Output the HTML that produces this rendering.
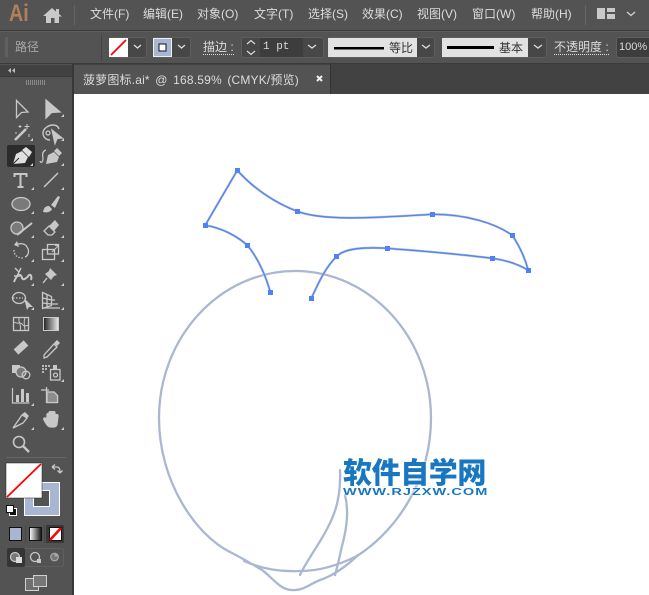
<!DOCTYPE html>
<html lang="zh"><head><meta charset="utf-8">
<style>
html,body{margin:0;padding:0;background:#fff}
#p{position:relative;width:649px;height:595px;overflow:hidden;background:#fff;font-family:"Liberation Sans","Noto Sans CJK SC",sans-serif}
#p svg{position:absolute;left:0;top:0}
.t{position:absolute;white-space:nowrap;font-size:12px;line-height:16px;color:#dcdcdc}
.u{border-bottom:1px dotted #ddd;line-height:14px}
</style></head><body>
<div id="p">
<svg width="649" height="595" viewBox="0 0 649 595" fill="none">
<!-- chrome -->
<rect width="649" height="595" fill="#535353"/>
<rect x="0" y="30" width="649" height="1" fill="#3a3a3a"/>
<rect x="0" y="31" width="649" height="1" fill="#5f5f5f"/>
<rect x="0" y="63" width="649" height="1" fill="#3a3a3a"/>
<rect x="72" y="64" width="577" height="30" fill="#424242"/>
<rect x="72" y="64" width="2" height="531" fill="#383838"/>
<rect x="74" y="65" width="256" height="29" fill="#535353"/>
<rect x="330" y="64" width="1" height="30" fill="#333"/>
<rect x="74" y="94" width="575" height="501" fill="#fff"/>
<rect x="0" y="65" width="72" height="11" fill="#424242"/>
<rect x="0" y="76" width="72" height="1" fill="#3a3a3a"/>
<path d="M11 68l-3 2.500 3 2.500zM15 68l-3 2.500 3 2.500z" fill="#bdbdbd"/>
<path d="M26.500 80v5M28.500 80v5M30.500 80v5M32.500 80v5M34.500 80v5M36.500 80v5M38.500 80v5M40.500 80v5M42.500 80v5M44.500 80v5" stroke="#8a8a8a"/>
<!-- top bar -->
<path d="M43 16l9-8 4 3.500V9h3v5l3 2.500h-3V23h-4.500v-5h-3.500v5H46v-7z" fill="#c9c9c9"/>
<rect x="74" y="5" width="1" height="20" fill="#666"/>
<rect x="585" y="5" width="1" height="20" fill="#666"/>
<path d="M597 8h8v11h-8zM607 8h8v4h-8zM607 14h8v5h-8z" fill="#c9c9c9"/>
<path d="M627 12l4 3.500 4-3.500" stroke="#d0d0d0" stroke-width="1.300"/>
<!-- control bar -->
<path d="M5 38h3M5 40h3M5 42h3M5 44h3M5 46h3M5 48h3M5 50h3M5 52h3M5 54h3M5 56h3" stroke="#6e6e6e"/>
<rect x="101" y="35" width="1" height="25" fill="#424242"/>
<rect x="109.500" y="37.500" width="37" height="20" rx="2" fill="#474747" stroke="#5e5e5e"/>
<rect x="109" y="38" width="19" height="19" fill="#fff"/>
<path d="M111 55L126 40" stroke="#f00" stroke-width="1.800"/>
<path d="M134 45l3.500 3 3.500-3" stroke="#ddd" stroke-width="1.300"/>
<rect x="153.500" y="37.500" width="37" height="20" rx="2" fill="#474747" stroke="#5e5e5e"/>
<rect x="153.500" y="38.500" width="18" height="18" fill="#a9b6d2" stroke="#eee"/>
<rect x="159" y="44" width="7" height="7" fill="#fff" stroke="#111"/>
<path d="M178 45l3.500 3 3.500-3" stroke="#ddd" stroke-width="1.300"/>
<rect x="241.500" y="37.500" width="82" height="20" rx="2" fill="#474747" stroke="#5e5e5e"/>
<rect x="260" y="38" width="43" height="19" fill="#3d3d3d"/>
<path d="M247 44l4-3.500 4 3.500M247 51l4 3.500 4-3.500" stroke="#ddd" stroke-width="1.200"/>
<path d="M308 45l4 3 4-3" stroke="#ddd" stroke-width="1.300"/>
<rect x="328.500" y="37.500" width="106" height="20" rx="2" fill="#474747" stroke="#5e5e5e"/>
<rect x="328" y="38" width="89" height="19" fill="#e2e2e2"/>
<rect x="334" y="47" width="50" height="2.500" fill="#000"/>
<path d="M422 45l4 3 4-3" stroke="#ddd" stroke-width="1.300"/>
<rect x="442.500" y="37.500" width="104" height="20" rx="2" fill="#474747" stroke="#5e5e5e"/>
<rect x="442" y="38" width="86" height="19" fill="#e2e2e2"/>
<rect x="447" y="46" width="47" height="3" fill="#000"/>
<path d="M534 45l4 3 4-3" stroke="#ddd" stroke-width="1.300"/>
<rect x="616.500" y="37.500" width="40" height="20" rx="2" fill="#3d3d3d" stroke="#5e5e5e"/>
<path d="M317 76l5 5M322 76l-5 5" stroke="#eee" stroke-width="2"/>
<!-- selected tool -->
<rect x="7" y="145" width="28" height="22" rx="2" fill="#2c2c2c"/>
<!-- corner flyouts -->
<g fill="#cfcfcf">
<path d="M64 117v-3l-3 3zM33 141v-3l-3 3zM64 141v-3l-3 3zM33 166v-3l-3 3zM64 166v-3l-3 3zM34 190v-3l-3 3zM64 190v-3l-3 3zM34 214v-3l-3 3zM64 214v-3l-3 3zM34 238v-3l-3 3zM64 238v-3l-3 3zM34 262v-3l-3 3zM64 262v-3l-3 3zM34 286v-3l-3 3zM64 286v-3l-3 3zM34 310v-3l-3 3zM64 310v-3l-3 3zM64 382v-3l-3 3zM34 406v-3l-3 3zM34 430v-3l-3 3zM64 430v-3l-3 3z"/>
</g>
<g stroke="#c8c8c8" stroke-width="1.300">
<!-- selection -->
<path d="M16.500 100.500v17l5-5 6.500-.5z"/>
<path d="M46 100v18l5.500-5.500 8.500-.5z" fill="#c8c8c8"/>
<!-- magic wand -->
<path d="M15 140l11-11" stroke-width="2.600"/>
<path d="M20 125v3M18.500 126.500h3M27 124v5M24.500 126.500h5M15 133h2M29 134v3" stroke-width="1"/>
<!-- lasso -->
<path d="M50 140c-4 0-7-3-7-7 0-4 5-8 10-8 3 0 5 1 6 4" stroke-width="1.400"/>
<path d="M52 130l10 8-5 .5-2 5z" fill="#c8c8c8"/>
<circle cx="48" cy="133" r="2"/>
<!-- pen -->
<path d="M13 164l3-10 6-3 6 6-3 6zM22 150l4-3 6 5-3 5z" fill="#e0e0e0" stroke="none"/>
<path d="M13 164l6-6" stroke="#2c2c2c" stroke-width="1"/>
<!-- curvature -->
<path d="M46 164l2-9 6-3 5 5-2 5zM54 151l3-3 5 5-3 3z" fill="#c8c8c8" stroke="none"/>
<path d="M46 150c-3 1-4 4-3 8 0 4-2 6-3 3" stroke-width="1.200"/>
<!-- type -->
<path d="M14.500 177v-3h12v3M20.500 174v13M17.500 187h6" stroke-width="2"/>
<!-- line -->
<path d="M44 187l14-14" stroke-width="1.500"/>
<!-- ellipse -->
<ellipse cx="21" cy="204" rx="9" ry="6.500" fill="#7a7a7a" stroke="#c8c8c8"/>
<!-- brush -->
<path d="M43 212c1-5 3-6 6-6l3 3c-1 3-5 4-9 3z" fill="#c8c8c8" stroke="none"/>
<path d="M51 205l7-9 2 1-5 11z" fill="#c8c8c8" stroke="none"/>
<!-- shaper -->
<circle cx="17" cy="228" r="6" fill="#7a7a7a"/>
<path d="M17 235l15-12" stroke-width="2"/>
<!-- eraser -->
<path d="M44 231l5-5 6 6-3 3h-4z"/>
<path d="M49 226l6-6 4 5-5 6z" fill="#c8c8c8" stroke="none"/>
<!-- rotate -->
<path d="M16 245c3-2 9-2 11 2 3 4 1 9-2 10" stroke-width="1.300"/>
<path d="M17 241l-3 4 5 2z" fill="#c8c8c8" stroke="none"/>
<path d="M14 250c0 5 3 8 9 8" stroke-dasharray="1.500 1.500"/>
<!-- scale -->
<rect x="42.500" y="249.500" width="12" height="10"/>
<rect x="47.500" y="244.500" width="11" height="9.500"/>
<path d="M52 252l6-6M55 245.500h3.500v3.500" stroke-width="1"/>
<!-- warp -->
<path d="M14 282c3-8 7-9 8-4 1 3 5 0 7-3 2-1 3 2 2 5" stroke-width="2"/>
<path d="M15 268l4 4M21 268l-4 8M14 276h6" stroke-width="1.400"/>
<!-- pin -->
<path d="M50 268l7 7-3 1-3 4-6-6 4-3z" fill="#c8c8c8" stroke="none"/>
<path d="M47 278l-4 5" stroke-width="1.400"/>
<!-- shape builder -->
<ellipse cx="19" cy="298" rx="6.500" ry="5.500"/>
<path d="M13 298h10" stroke-dasharray="1.500 1.500"/>
<path d="M24 298l9 9-4 0-2 3z" fill="#c8c8c8" stroke="none"/>
<!-- perspective -->
<path d="M42.500 292.500l9 4v9l-9 3zM42.500 298l9 2M42.500 303l9 1M47 295v12"/>
<path d="M52 300h3M52 304h6M43 308h17" stroke-width="1.200"/>
<!-- mesh -->
<rect x="13.500" y="317.500" width="15" height="13"/>
<path d="M14 322c4 3 6-1 8 2s3 2 7 1M19 318c-1 5 3 6 1 13M25 318c-2 4 0 8 0 13" stroke-width="1"/>
<!-- gradient -->
<defs><linearGradient id="g1"><stop offset="0" stop-color="#222"/><stop offset="1" stop-color="#eee"/></linearGradient></defs>
<rect x="43.500" y="317.500" width="15" height="13" fill="url(#g1)" stroke="#c8c8c8" stroke-width="1"/>
<!-- measure / ruler -->
<path d="M16 352l10-9" stroke-width="7"/>
<!-- eyedropper -->
<path d="M44 355l10-11 3 3-10 10-3 1z"/>
<path d="M54 343l3-3 3 3-3 3z" fill="#c8c8c8" stroke="none"/>
<!-- blend -->
<rect x="12" y="365" width="8" height="8" fill="#c8c8c8" stroke="none"/>
<circle cx="21" cy="372" r="5" fill="#7a7a7a"/>
<circle cx="26" cy="375" r="3.800"/>
<!-- symbol sprayer -->
<path d="M42 366h2M45 366h2M48 366h2M42 369h2M45 369h2M42 372h2" stroke-width="1.800"/>
<rect x="50.500" y="369.500" width="9.500" height="10.500"/>
<rect x="53" y="365" width="4" height="4" fill="#c8c8c8" stroke="none"/>
<circle cx="55.500" cy="375" r="2"/>
<!-- graph -->
<path d="M12.500 388v15h17" stroke-width="1.200"/>
<path d="M16 402v-7h3v7zM21 402v-13h3v13zM26 402v-9h3v9z" fill="#c8c8c8" stroke="none"/>
<!-- artboard -->
<path d="M46.500 392v-5M41 390h8M49 392h5l3.500 3.500v7H46.500v-10.500z"/>
<path d="M47 392h7l3.500 3.500v7H47z" fill="#8d8d8d"/>
<!-- slice -->
<path d="M13 428l9-13 5 3-4 5z"/>
<path d="M22 414l3-2 4 4-2 2z" fill="#c8c8c8" stroke="none"/>
<path d="M13 428l10-5" stroke-width="1"/>
<!-- hand -->
<path d="M47 420v-5c0-2 2-2 2 0v-2c0-2 3-2 3 0v0c0-2 3-2 3 0v3c1-2 3-2 3 0l-1 8c0 2-2 3-3 3h-3c-3 0-4-2-7-7-1-2 1-3 3-1z" fill="#c8c8c8"/>
<!-- zoom -->
<circle cx="19" cy="442" r="5.500" stroke-width="1.600"/>
<path d="M23 446l6 6" stroke-width="2.400"/>
</g>
<rect x="6" y="457" width="60" height="1" fill="#666"/>
<!-- fill / stroke -->
<rect x="24.500" y="482.500" width="35" height="33" fill="#a9b6d2" stroke="#fff"/>
<rect x="33.500" y="490.500" width="16" height="16" fill="#535353" stroke="#fff"/>
<rect x="6" y="463" width="36" height="35" fill="#fff" stroke="#222" stroke-width=".5"/>
<path d="M7 497L41 464" stroke="#f00" stroke-width="1.800"/>
<path d="M52 467h5c2 0 3 2 3 5M52 467l3-2.500M52 467l3 2.500M60 473l-2.500-2.500M60 473l2.500-2.500" stroke="#c8c8c8" stroke-width="1.300"/>
<rect x="9.500" y="508.500" width="7" height="7" fill="#111" stroke="#fff"/>
<rect x="6.500" y="505.500" width="7" height="7" fill="#fff" stroke="#111"/>
<!-- colour modes -->
<rect x="46" y="525" width="18" height="18" rx="1" fill="#383838"/>
<rect x="9.500" y="527.500" width="12" height="13" fill="#a9b6d2" stroke="#111"/>
<defs><linearGradient id="g2"><stop offset="0" stop-color="#fff"/><stop offset="1" stop-color="#111"/></linearGradient></defs>
<rect x="29.500" y="527.500" width="12" height="13" fill="url(#g2)" stroke="#111"/>
<rect x="49.500" y="527.500" width="12" height="13" fill="#fff" stroke="#111"/>
<path d="M50 540L61 528" stroke="#f00" stroke-width="2.500"/>
<rect x="25" y="525" width="1" height="18" fill="#474747"/>
<rect x="44" y="525" width="1" height="18" fill="#474747"/>
<!-- draw modes -->
<rect x="7.500" y="548.500" width="56" height="18" rx="2" stroke="#5f5f5f"/>
<rect x="7" y="548" width="18" height="19" rx="2" fill="#353535"/>
<circle cx="15" cy="557" r="4.500" stroke="#c8c8c8" stroke-width="1.300" fill="#777"/>
<rect x="16" y="557" width="6" height="6" fill="#dcdcdc"/>
<circle cx="35" cy="557" r="4.500" stroke="#c8c8c8" stroke-width="1.300"/>
<rect x="37" y="559" width="4" height="4" fill="#c8c8c8"/>
<circle cx="54.500" cy="557" r="3.800" stroke="#a8a8a8" stroke-width="1.200" fill="#777"/>
<rect x="54.500" y="553.500" width="3" height="3" fill="#a8a8a8"/>
<!-- screen mode -->
<rect x="25.500" y="578.500" width="13" height="12" fill="#6f6f6f" stroke="#d0d0d0"/>
<rect x="33.500" y="575.500" width="13" height="11" fill="#777" stroke="#d0d0d0"/>
<!-- artwork -->
<g stroke="#abb7d1" stroke-width="2.300" stroke-linecap="round">
<path d="M205 225.500L237.300 170.300C253 188 275 203 297.300 211.300C325 222 385 217 432.300 214.300C465 214 495 223 512.300 235.300C520 247 525 258 528.300 270.300C518 264 505 260 492.300 258.300C450 253 420 251 387.300 248.300C365 247 345 248 336.700 256.300C325 268 319 282 311.300 298.300"/>
<path d="M205.300 225.300C222 228 237 236 247.300 245.300C258 258 266 276 270.300 292.300"/>
<path d="M230 552C196 535 159 482 159 418C159 337 220 271 295 271C370 271 431 337 431 418C431 480 397 530 357 556C337 566 318 571 300 571C280 572 262 569 244 561"/>
<path d="M230 552C240 557 252 564 262 570C272 577 280 590 292 590C303 591 310 584 320 580C330 577 345 568 358 555"/>
<path d="M340 470C341 495 336 512 328 527C319 545 307 560 300 575"/>
<path d="M345 495C350 515 345 535 341 550C339 560 337 568 335 575"/>
</g>
<g stroke="#4f83f5" stroke-width="1.200">
<path d="M270.300 292.300C266 276 258 258 247.300 245.300C237 236 222 228 205.300 225.300L237.300 170.300C253 188 275 203 297.300 211.300C325 222 385 217 432.300 214.300C465 214 495 223 512.300 235.300C520 247 525 258 528.300 270.300C518 264 505 260 492.300 258.300C450 253 420 251 387.300 248.300C365 247 345 248 336.700 256.300C325 268 319 282 311.300 298.300"/>
</g>
<g fill="#4f83f5">
<rect x="235" y="168" width="5" height="5"/><rect x="295" y="209" width="5" height="5"/><rect x="430" y="212" width="5" height="5"/><rect x="510" y="233" width="5" height="5"/><rect x="526" y="268" width="5" height="5"/><rect x="490" y="256" width="5" height="5"/><rect x="385" y="246" width="5" height="5"/><rect x="334" y="254" width="5" height="5"/><rect x="309" y="296" width="5" height="5"/><rect x="203" y="223" width="5" height="5"/><rect x="245" y="243" width="5" height="5"/><rect x="268" y="290" width="5" height="5"/>
</g>
</svg>
<div class="t" style="left:9px;top:0;font-size:24px;line-height:27px;font-weight:bold;color:#b27f5e;transform:scaleX(.82);transform-origin:left top">Ai</div>
<div class="t" style="left:90px;top:6px">文件(F)</div>
<div class="t" style="left:143px;top:6px">编辑(E)</div>
<div class="t" style="left:197px;top:6px">对象(O)</div>
<div class="t" style="left:254px;top:6px">文字(T)</div>
<div class="t" style="left:308px;top:6px">选择(S)</div>
<div class="t" style="left:362px;top:6px">效果(C)</div>
<div class="t" style="left:417px;top:6px">视图(V)</div>
<div class="t" style="left:472px;top:6px">窗口(W)</div>
<div class="t" style="left:531px;top:6px">帮助(H)</div>
<div class="t" style="left:15px;top:39px;color:#a8a8a8">路径</div>
<div class="t u" style="left:203px;top:40px">描边 :</div>
<div class="t" style="left:263px;top:39px;font-family:'Liberation Mono',monospace;font-size:11px">1 pt</div>
<div class="t" style="left:389px;top:40px;color:#333">等比</div>
<div class="t" style="left:499px;top:40px;color:#333">基本</div>
<div class="t u" style="left:554px;top:40px">不透明度 :</div>
<div class="t" style="left:619px;top:39px;font-size:11px">100%</div>
<div class="t" style="left:83px;top:72px;letter-spacing:.18px;word-spacing:2px">菠萝图标.ai* @ 168.59% (CMYK/预览)</div>
<div class="t" style="left:343px;top:453px;font-family:'Noto Sans CJK SC',sans-serif;font-weight:900;font-size:29px;line-height:36px;letter-spacing:-.4px;color:#1877c0;text-shadow:0 0 2px #fff,0 0 2px #fff">软件自学网</div>
<div class="t" style="left:343px;top:486px;font-weight:bold;font-size:10px;line-height:13px;letter-spacing:.7px;color:#1877c0;transform:scaleX(1.45);transform-origin:left top;text-shadow:0 0 2px #fff,0 0 2px #fff">WWW.RJZXW.COM</div>
</div>
</body></html>
